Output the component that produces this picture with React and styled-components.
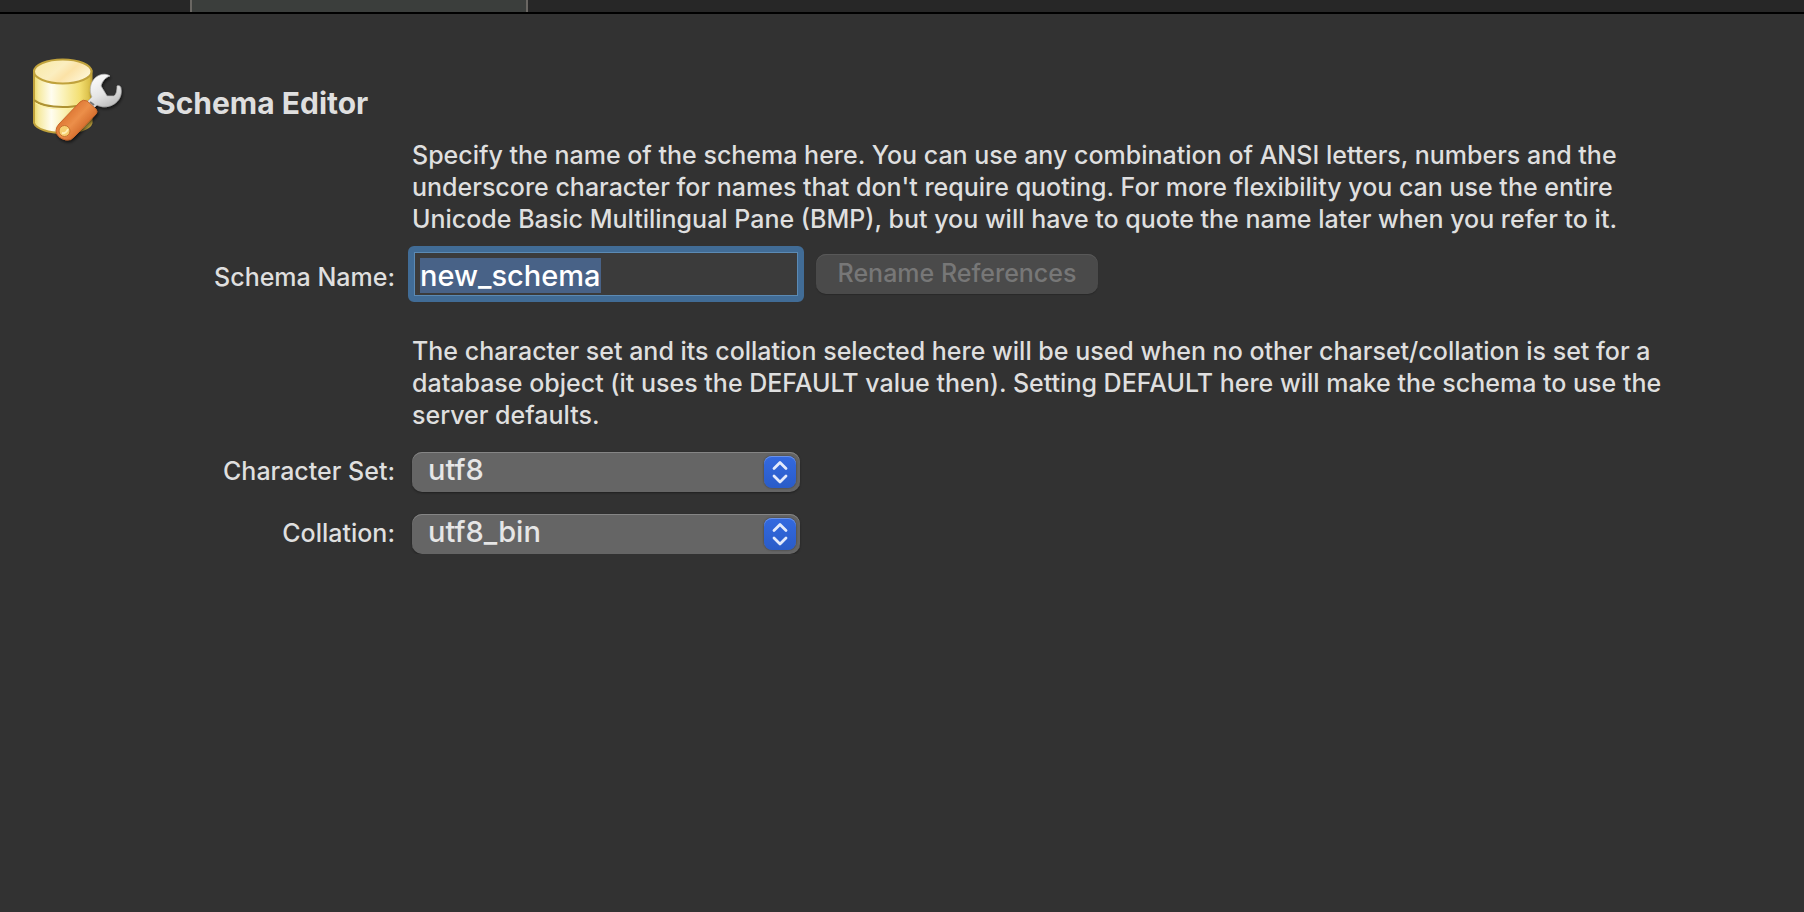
import React, { useEffect, useRef } from "react";
import styled, { createGlobalStyle } from "styled-components";

const GlobalStyle = createGlobalStyle`
  * { box-sizing: border-box; }
  body {
    margin: 0;
    background: #323232;
    color: #dfdfdf;
    font-family: Inter, "Liberation Sans", sans-serif;
    font-size: 25px;
    font-weight: 500;
    line-height: 32px;
  }
`;

const TabStrip = styled.nav`
  display: flex;
  height: 14px;
  padding-left: 190px;
  background: #272727;
  border-bottom: 2px solid #000;
`;

const ActiveTab = styled.div`
  width: 338px;
  background: #3b3e3c;
  border: solid #6a6763;
  border-width: 0 2px;
`;

const Header = styled.header`
  display: flex;
  gap: 30px;
  padding: 42px 30px 0;
`;

const SchemaIcon = styled.svg`
  flex: none;
  width: 96px;
  height: 83px;
  overflow: visible;
`;

const Title = styled.h1`
  margin: 27px 0 0;
  font-size: 30px;
  line-height: 40px;
  font-weight: 700;
`;

const Form = styled.form`
  display: grid;
  grid-template-columns: 395px minmax(0, 1fr);
  column-gap: 17px;
  padding-right: 104px;
`;

const Hint = styled.p`
  grid-column: 2;
  margin: 0;
`;

const Label = styled.label`
  justify-self: end;
  align-self: center;
`;

const NameLabel = styled(Label)`
  margin: 11px 0 33px;
  padding-top: 6px;
`;

const NameRow = styled.div`
  display: flex;
  align-items: center;
  gap: 12px;
  margin: 11px 0 33px -4px;
`;

const NameInput = styled.input`
  width: 396px;
  height: 56px;
  padding: 2px 6px 0;
  border: 6px solid #416c96;
  border-radius: 6px;
  outline: 1px solid #5b8ab4;
  outline-offset: -7px;
  background: #3b3b3b;
  color: #fff;
  font: inherit;
  font-size: 29px;
  line-height: 38px;

  &::selection {
    background: #486287;
    color: #fff;
  }
`;

const RenameButton = styled.button`
  width: 282px;
  height: 40px;
  padding: 0 0 2px;
  border: 0;
  border-radius: 10px;
  background: #4a4a4a;
  box-shadow: inset 0 1px #585858, 0 1px 1px #292929;
  color: #777;
  font: inherit;
`;

const SelectBox = styled.div`
  display: grid;
  align-items: center;
  width: 388px;
  height: 40px;
  margin: ${(p) => (p.$first ? 21 : 22)}px 0 0;
`;

const SelectLabel = styled(Label)`
  align-self: end;
  line-height: 42px;
`;

const Select = styled.select`
  grid-area: 1 / 1;
  width: 100%;
  height: 40px;
  padding: 0 48px 4px 16px;
  appearance: none;
  border: 0;
  border-radius: 10px;
  background: #656565;
  box-shadow: inset 0 1px #858585, 0 1px 2px #202020;
  color: #e6e6e6;
  font: inherit;
  font-size: 29px;
  line-height: 36px;
`;

const Stepper = styled.svg`
  grid-area: 1 / 1;
  justify-self: end;
  width: 32px;
  height: 32px;
  margin-right: 4px;
  border-radius: 8px;
  background: linear-gradient(#3369e0, #2a5cc8);
  box-shadow: inset 0 1px #6a92ea, 0 0 2px #333;
  pointer-events: none;
`;

function DatabaseWrench() {
  return (
    <SchemaIcon viewBox="0 0 96 83" aria-hidden="true">
      <defs>
        <linearGradient id="side">
          <stop offset="0" stopColor="#ecd968" />
          <stop offset=".08" stopColor="#f6eaa0" />
          <stop offset=".3" stopColor="#fffdf0" />
          <stop offset=".5" stopColor="#fbf3bc" />
          <stop offset=".8" stopColor="#f3df72" />
          <stop offset="1" stopColor="#d5b83f" />
        </linearGradient>
        <linearGradient id="lid" x2="1" y2=".5">
          <stop offset="0" stopColor="#f8e9a4" />
          <stop offset=".5" stopColor="#fbeec0" />
          <stop offset=".7" stopColor="#fbe2a6" />
          <stop offset="1" stopColor="#fdf3d0" />
        </linearGradient>
        <linearGradient id="steel" x1=".2" y1="0" x2=".7" y2="1">
          <stop offset="0" stopColor="#fff" />
          <stop offset=".55" stopColor="#e4e4e4" />
          <stop offset="1" stopColor="#b4b4b4" />
        </linearGradient>
        <linearGradient id="grip" x1=".25" y1=".3" x2=".75" y2=".75">
          <stop offset="0" stopColor="#dc7432" />
          <stop offset=".45" stopColor="#ec8f49" />
          <stop offset="1" stopColor="#cf6427" />
        </linearGradient>
        <filter id="shade" x="-30%" y="-30%" width="160%" height="160%">
          <feDropShadow dx="1" dy="2" stdDeviation="1.5" floodColor="#000" floodOpacity=".6" />
        </filter>
      </defs>
      <g stroke="#c0a23c" strokeWidth="2">
        <path d="M4 15V67C6 73 19 77 33 77S60 73 61.500 67V15Z" fill="url(#side)" />
        <ellipse cx="32.750" cy="15.500" rx="28.750" ry="12" fill="url(#lid)" />
        <path d="M4 44C10 49 20 51 33 51S56 49 61.500 44" fill="none" stroke="#ae9232" strokeWidth="2" />
      </g>
      <path d="M5.500 47C12 51 20 53 33 53S55 51 60.500 47" fill="none" stroke="#fff2a0" />
      <g filter="url(#shade)">
        <path
          d="M56 47L62 41C59 35 60 27 65 22C69 18 76 17 80 20C76 21 72 25 71 30L77 40L84 40C87 38 87 33 87 30C89 29 91 30 91 33C92 39 89 45 84 48C79 51 73 52 67 49L62 54Z"
          fill="url(#steel)" stroke="#b8b8b8" strokeWidth=".7"
        />
        <path d="M60 46L64 49" stroke="#777" strokeWidth="2" />
        <path
          d="M50 46Q53 43 57 45L66 53Q68 56 66 58L45 80Q41 85 36 84Q27 82 26 75Q26 71 29 68Z"
          fill="url(#grip)" stroke="#c8672c"
        />
        <circle cx="34.500" cy="75" r="5.500" fill="#f6cf70" stroke="#c8722f" />
        <path d="M32 77Q36 78 38 73" fill="none" stroke="#fff0b6" strokeWidth="2" />
      </g>
    </SchemaIcon>
  );
}

function Dropdown({ id, first, options }) {
  return (
    <SelectBox $first={first}>
      <Select id={id}>
        {options.map((o) => <option key={o}>{o}</option>)}
      </Select>
      <Stepper viewBox="0 0 32 32" aria-hidden="true">
        <path d="M10 12.500L16 6.500L22 12.500M10 20L16 26L22 20" fill="none" stroke="#e3eafb" strokeWidth="2.800" strokeLinecap="round" strokeLinejoin="round" />
      </Stepper>
    </SelectBox>
  );
}

export default function App() {
  const nameRef = useRef(null);
  useEffect(() => {
    nameRef.current.focus();
    nameRef.current.select();
  }, []);

  return (
    <>
      <GlobalStyle />
      <TabStrip><ActiveTab /></TabStrip>
      <main>
        <Header>
          <DatabaseWrench />
          <Title>Schema Editor</Title>
        </Header>
        <Form onSubmit={(e) => e.preventDefault()}>
          <Hint>
            Specify the name of the schema here. You can use any combination of ANSI letters, numbers and the
            underscore character for names that don't require quoting. For more flexibility you can use the entire
            Unicode Basic Multilingual Pane (BMP), but you will have to quote the name later when you refer to it.
          </Hint>
          <NameLabel htmlFor="name">Schema Name:</NameLabel>
          <NameRow>
            <NameInput id="name" ref={nameRef} defaultValue="new_schema" spellCheck={false} autoComplete="off" />
            <RenameButton type="button" disabled>Rename References</RenameButton>
          </NameRow>
          <Hint>
            The character set and its collation selected here will be used when no other charset/collation is set for a
            database object (it uses the DEFAULT value then). Setting DEFAULT here will make the schema to use the
            server defaults.
          </Hint>
          <SelectLabel htmlFor="charset">Character Set:</SelectLabel>
          <Dropdown id="charset" first options={["utf8"]} />
          <SelectLabel htmlFor="collation">Collation:</SelectLabel>
          <Dropdown id="collation" options={["utf8_bin"]} />
        </Form>
      </main>
    </>
  );
}
